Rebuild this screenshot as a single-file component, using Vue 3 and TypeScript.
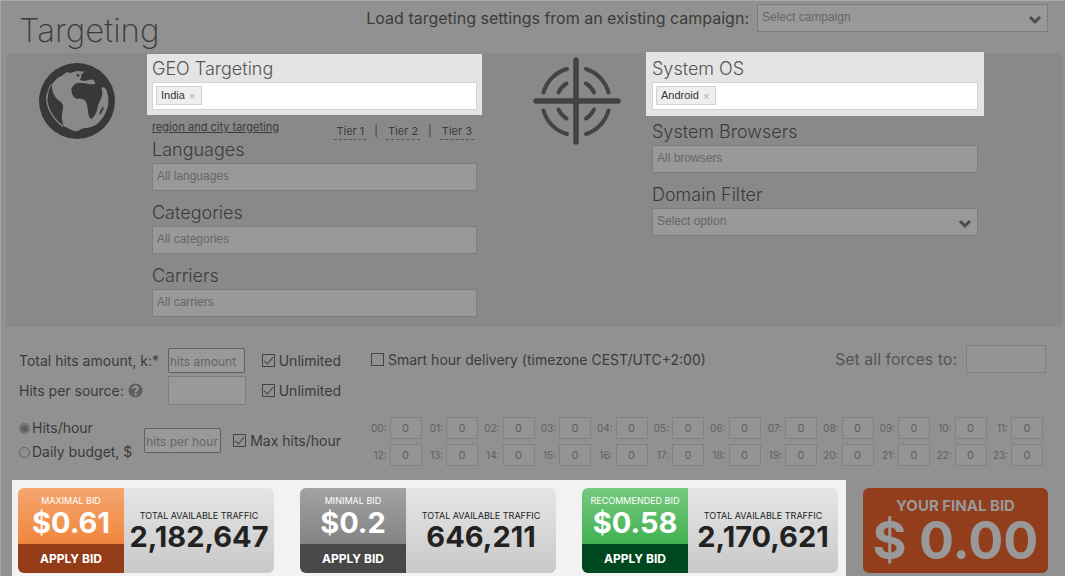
<script setup lang="ts">
import { ref } from 'vue'

interface Bid {
  kind: string
  label: string
  price: string
  traffic: string
}

const bids: Bid[] = [
  { kind: 'max', label: 'MAXIMAL BID', price: '$0.61', traffic: '2,182,647' },
  { kind: 'min', label: 'MINIMAL BID', price: '$0.2', traffic: '646,211' },
  { kind: 'rec', label: 'RECOMMENDED BID', price: '$0.58', traffic: '2,170,621' },
]

const leftFields = ['Languages', 'Categories', 'Carriers']
const tiers = ['Tier 1', 'Tier 2', 'Tier 3']
const hours = ref(Array.from({ length: 24 }, (_, i) => ({ name: String(i).padStart(2, '0'), value: '0' })))
const mode = ref('hits')
const unlimitedTotal = ref(true)
const unlimitedSource = ref(true)
const maxHits = ref(true)
const smart = ref(false)
</script>

<template>
  <main class="page">
    <header class="head">
      <h1>Targeting</h1>
      <label class="load" for="campaign">Load targeting settings from an existing campaign:</label>
      <div class="select campaign">
        <select id="campaign"><option>Select campaign</option></select>
        <svg class="chev" viewBox="0 0 14 10"><path d="M2 2l5 5 5-5" /></svg>
      </div>
    </header>

    <section class="panel">
      <div class="icon">
        <svg class="globe" viewBox="26 24 228 228">
          <circle cx="140" cy="138" r="114" fill="#383838" />
          <path fill="#898989" d="M64 90Q76 70 94 62L110 51L120 54L140 48L164 50L156 55Q150 62 152 68L148 74Q160 80 172 76Q184 70 192 77L195 86Q182 90 164 85L142 83Q128 88 123 102Q124 126 138 131Q156 128 164 136Q172 148 173 172Q176 190 182 192Q192 188 200 166Q202 148 210 136Q220 116 213 98Q222 94 228 104Q238 130 232 156Q224 186 200 208Q180 220 158 220L142 228Q128 230 118 222L100 214Q90 190 98 160Q102 146 82 134Q66 120 64 90Z" />
          <path fill="#383838" d="M208 180Q206 166 220 154Q222 166 208 180Z" />
          <circle cx="143" cy="61" r="4" fill="#383838" />
          <path d="M51 116Q46 136 56 162Q70 194 98 214" fill="none" stroke="#898989" stroke-width="4" />
          <path d="M62 88Q52 104 50 128" fill="none" stroke="#898989" stroke-width="3" />
        </svg>
      </div>
      <div class="col">
        <div class="spot geo">
          <label for="geo">GEO Targeting</label>
          <div class="tags">
            <span class="tag">India<button type="button" aria-label="Remove India">×</button></span>
            <input id="geo" type="text">
          </div>
        </div>
        <div class="links">
          <a class="region" href="#">region and city targeting</a>
          <nav class="tiers">
            <template v-for="(t, i) in tiers" :key="t">
              <span v-if="i">|</span><a href="#">{{ t }}</a>
            </template>
          </nav>
        </div>
        <div v-for="f in leftFields" :key="f" class="field">
          <label :for="f">{{ f }}</label>
          <input :id="f" type="text" :placeholder="'All ' + f.toLowerCase()">
        </div>
      </div>
      <div class="icon">
        <svg class="target" viewBox="0 0 88 88">
          <g fill="none" stroke="#444243" stroke-linecap="round">
            <path stroke-width="5.500" d="M43 3v82M3 44h82" />
            <path stroke-width="4" d="M34 12A34 34 0 0 0 10.500 35.500M53 12A34 34 0 0 1 75.500 35.500M10.500 53.500A34 34 0 0 0 34 77M75.500 53.500A34 34 0 0 1 53 77M33.500 26.500A20 20 0 0 0 25.500 35.500M53 26.500A20 20 0 0 1 61 35.500M25.500 52.500A20 20 0 0 0 33.500 61.500M61 52.500A20 20 0 0 1 53 61.500" />
          </g>
        </svg>
      </div>
      <div class="col">
        <div class="spot os">
          <label for="os">System OS</label>
          <div class="tags">
            <span class="tag">Android<button type="button" aria-label="Remove Android">×</button></span>
            <input id="os" type="text">
          </div>
        </div>
        <div class="field">
          <label for="browsers">System Browsers</label>
          <input id="browsers" type="text" placeholder="All browsers">
        </div>
        <div class="field">
          <label for="domain">Domain Filter</label>
          <div class="select">
            <select id="domain"><option>Select option</option></select>
            <svg class="chev" viewBox="0 0 14 10"><path d="M2 2l5 5 5-5" /></svg>
          </div>
        </div>
      </div>
    </section>

    <section class="settings">
      <div class="limits">
        <label for="total">Total hits amount, k:*</label>
        <input id="total" class="amount" type="text" placeholder="hits amount">
        <label class="check"><input v-model="unlimitedTotal" type="checkbox">Unlimited</label>
        <div class="source">
          <label for="source">Hits per source:</label>
          <svg viewBox="0 0 16 16"><circle cx="8" cy="8" r="7.500" fill="#606060" /><path d="M5.500 6.200C5.500 2.800 10.700 3 10.500 6.200C10.400 7.900 8 7.800 8 10M8 11.300v2" fill="none" stroke="#999" stroke-width="2" /></svg>
        </div>
        <input id="source" class="per-source" type="text">
        <label class="check"><input v-model="unlimitedSource" type="checkbox">Unlimited</label>
      </div>
      <div class="delivery">
        <label class="check"><input v-model="smart" type="checkbox">Smart hour delivery (timezone CEST/UTC+2:00)</label>
        <div class="forces">
          <label for="forces">Set all forces to:</label>
          <input id="forces" type="text">
        </div>
      </div>
      <div class="rate">
        <div class="modes">
          <label><input v-model="mode" type="radio" name="mode" value="hits">Hits/hour</label>
          <label><input v-model="mode" type="radio" name="mode" value="budget">Daily budget, $</label>
        </div>
        <input class="amount" type="text" placeholder="hits per hour" aria-label="Hits per hour">
        <label class="check"><input v-model="maxHits" type="checkbox">Max hits/hour</label>
      </div>
      <div class="hours">
        <label v-for="h in hours" :key="h.name">{{ h.name }}:<input v-model="h.value" type="text"></label>
      </div>
    </section>

    <footer class="bids">
      <div class="strip">
        <article v-for="b in bids" :key="b.kind" class="card" :class="b.kind">
          <div class="bid">
            <div class="price"><small>{{ b.label }}</small><strong>{{ b.price }}</strong></div>
            <button type="button">APPLY BID</button>
          </div>
          <div class="traffic"><small>TOTAL AVAILABLE TRAFFIC</small><strong>{{ b.traffic }}</strong></div>
        </article>
      </div>
      <div class="final"><span>YOUR FINAL BID</span><strong>$ 0.00</strong></div>
    </footer>
  </main>
</template>

<style>
body { margin: 0; background: #919191; }
</style>

<style scoped>
* { box-sizing: border-box; }
.page {
  min-height: 100vh;
  border-top: 1px solid #a9a9a9;
  border-left: 1px solid #a5a5a5;
  background: #919191;
  color: #3b3b3b;
  font-family: Inter, "Liberation Sans", sans-serif;
  font-size: 14px;
}
input, select, button { font: inherit; margin: 0; border-radius: 0; }
input[type="text"], select {
  min-width: 0;
  border: 1px solid #7d7d7d;
  background: #999;
  color: #606060;
  outline: 0;
}
input::placeholder { color: #676767; opacity: 1; }

.head { display: flex; align-items: flex-start; height: 52px; padding: 3px 17px 0 18px; }
h1 { flex: 1; margin: 8px 0 0; font-size: 33px; line-height: 36px; font-weight: 200; color: #3b3b3b; }
.load { margin: 3px 8px 0 0; font-size: 16px; line-height: 22px; }
.select { position: relative; }
.select select {
  display: block;
  appearance: none;
  width: 100%;
  height: 28px;
  padding: 0 4px 3px;
  font-family: "Liberation Sans", sans-serif;
  font-size: 13px;
  color: #676767;
}
.campaign { width: 291px; }
.chev { position: absolute; right: 6px; top: 11px; width: 14px; height: 10px; fill: none; stroke: #4c4c4c; stroke-width: 3; }

.panel {
  display: grid;
  grid-template-columns: 141px minmax(0, 335fr) 164px minmax(0, 338fr) 78px;
  margin: 0 3px 0 5px;
  padding-bottom: 10px;
  border-radius: 4px;
  background: #898989;
}
.icon { display: flex; align-items: flex-start; justify-content: center; padding-top: 4px; }
.icon svg { display: block; }
.globe { width: 76px; height: 76px; margin-top: 6px; }
.target { width: 88px; height: 88px; margin-left: 26px; }
.spot { background: #e4e4e4; color: #666; }
.spot.geo { margin-top: 1px; padding: 1px 5px 5px; }
.spot.os { margin-top: -1px; margin-bottom: 2px; padding: 3px 6px 6px; }
.spot label, .field label { display: block; font-size: 18px; font-weight: 300; line-height: 27px; }
.spot label { color: #555; }
.tags { display: flex; height: 28px; padding: 3px; border: 1px solid #d4d4d4; background: #fff; }
.tags input[type="text"] { flex: 1; border: 0; background: transparent; }
.tag {
  display: flex;
  gap: 4px;
  height: 19px;
  padding: 0 6px 0 4px;
  border: 1px solid #d0d0d0;
  background: #eee;
  color: #333;
  font-family: "Liberation Sans", sans-serif;
  font-size: 11px;
  line-height: 16px;
}
.tag button { padding: 0; border: 0; background: none; color: #aaa; }
.links { display: flex; justify-content: space-between; height: 21px; padding: 0 8px 0 5px; }
a { color: inherit; }
.region { font-size: 11px; line-height: 24px; }
.tiers { display: flex; gap: 8px; padding-top: 8px; font-size: 11px; line-height: 16px; }
.tiers a { height: 17px; padding: 0 2px; border-bottom: 1px dashed #555; text-decoration: none; }
.field { padding: 0 5px; }
.os ~ .field { padding: 0 6px; }
.field + .field { margin-top: 8px; }
.field > input {
  display: block;
  width: 100%;
  height: 28px;
  padding: 0 4px 3px;
  font-family: "Liberation Sans", sans-serif;
  font-size: 12px;
}
.select select { font-size: 12px; }

.settings { display: grid; grid-template-columns: 322px minmax(0, 1fr); column-gap: 30px; padding: 18px 19px 0 18px; }
.limits { display: grid; grid-template-columns: 149px 78px 1fr; grid-template-rows: 30px 30px; align-items: center; }
.amount { width: 77px; height: 25px; }
input.amount { padding: 2px 1px 0; border-color: #606060; border-radius: 2px; font-size: 12px; }
.per-source { width: 78px; height: 29px; }
.limits .check { justify-self: end; }
.check { display: flex; align-items: center; gap: 4px; white-space: nowrap; }
.check input {
  appearance: none;
  display: grid;
  place-items: center;
  width: 13px;
  height: 13px;
  border: 1px solid #444;
}
.check input:checked::after {
  content: "";
  width: 4px;
  height: 8px;
  margin-top: -2px;
  border: solid #444;
  border-width: 0 1px 1px 0;
  transform: rotate(40deg);
}
.source { display: flex; align-items: center; gap: 4px; }
.source svg { width: 15px; height: 15px; }
.delivery { display: flex; align-items: flex-start; justify-content: space-between; }
.delivery > .check { height: 29px; }
.forces { display: flex; align-items: center; gap: 9px; color: #555; font-size: 16px; }
.forces input { width: 80px; height: 28px; border-color: #808080; background: #949494; }
.rate { display: flex; align-items: center; justify-content: space-between; padding-top: 9px; }
.modes label { display: flex; align-items: center; gap: 2px; line-height: 24px; }
.modes input {
  appearance: none;
  width: 11px;
  height: 11px;
  border: 1px solid #606060;
  border-radius: 50%;
}
.modes input:checked { border-color: #6c6c6c; background: #606060; box-shadow: inset 0 0 0 1px #858585; }
.hours {
  display: grid;
  grid-template-columns: repeat(12, minmax(0, 1fr));
  gap: 5px 6px;
  align-content: start;
  margin: 0 3px 0 0;
  padding-top: 12px;
}
.hours label { display: flex; align-items: center; justify-content: flex-end; gap: 3px; color: #606060; font-size: 10px; }
.hours input { width: 32px; height: 22px; padding: 0; border-color: #828282; background: #949494; text-align: center; font-size: 11px; }

.bids { display: flex; justify-content: space-between; padding: 14px 17px 0 11px; }
.strip { display: grid; grid-template-columns: repeat(3, 256px); gap: 26px; padding: 8px 8px 3px 6px; background: #f2f2f2; }
.card { display: flex; height: 85px; overflow: hidden; border-radius: 6px; text-align: center; }
.bid { display: flex; flex-direction: column; width: 106px; color: #fff; }
.price { flex: 1; padding-top: 7px; }
.card small { display: block; font-size: 9px; line-height: 12px; }
.price strong { display: block; font-size: 29px; line-height: 32px; }
.bid button { height: 29px; padding: 0; border: 0; color: #fff; font-size: 12px; font-weight: 700; }
.max .price { background: linear-gradient(#f5a670, #f0863c); }
.max button { background: #943c18; }
.min .price { background: linear-gradient(#a2a2a2, #838383); }
.min button { background: #484848; }
.rec .price { background: linear-gradient(#76c880, #42b250); }
.rec button { background: #004820; }
.traffic { flex: 1; padding-top: 22px; background: linear-gradient(#e5e5e5, #c9c9c9); color: #222; }
.traffic strong { display: block; font-size: 29px; line-height: 30px; }
.final {
  width: 185px;
  height: 85px;
  margin-top: 8px;
  padding-top: 8px;
  border-radius: 6px;
  background: #923d1c;
  color: #999;
  text-align: center;
}
.final span { display: block; font-size: 15px; line-height: 19px; font-weight: 700; }
.final strong { display: block; font-size: 52px; line-height: 52px; }
</style>
